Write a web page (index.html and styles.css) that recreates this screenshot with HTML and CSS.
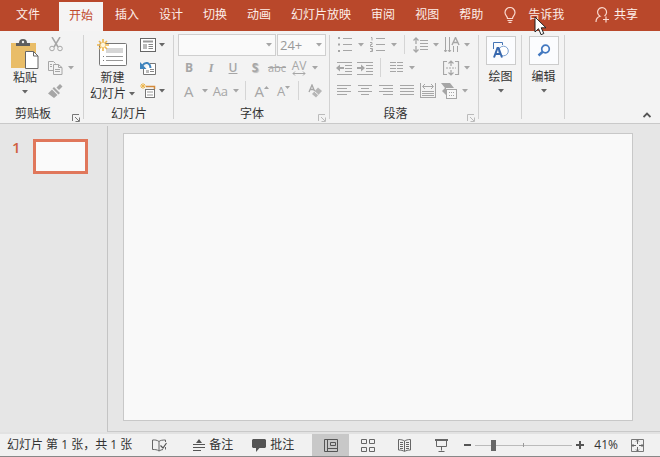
FILE: index.html
```html
<!DOCTYPE html>
<html lang="zh-CN">
<head>
<meta charset="utf-8">
<title>演示文稿</title>
<link rel="stylesheet" href="styles.css">
</head>
<body>
<svg class="defs" aria-hidden="true">
  <symbol id="caret" viewBox="0 0 6 4"><path d="M0 0h6L3 3.5z" fill="currentColor"/></symbol>
  <symbol id="launcher" viewBox="0 0 8 8"><path d="M.5 7V.5H7M3 3l4 4M7.5 3.5v4h-4" fill="none" stroke="currentColor"/></symbol>
</svg>
<header class="tabs">
  <nav class="tab-list">
    <a class="tab file" href="#">文件</a>
    <a class="tab active" href="#">开始</a>
    <a class="tab" href="#">插入</a>
    <a class="tab" href="#">设计</a>
    <a class="tab" href="#">切换</a>
    <a class="tab" href="#">动画</a>
    <a class="tab" href="#">幻灯片放映</a>
    <a class="tab" href="#">审阅</a>
    <a class="tab" href="#">视图</a>
    <a class="tab" href="#">帮助</a>
  </nav>
  <button class="tell">
    <svg width="12" height="16" viewBox="0 0 12 16"><path d="M3.5 11.500C3.500 9 1 8.500 1 5.500a5 5 0 0 1 10 0c0 3-2.500 3.500-2.500 6zM3.500 13.500h5M4.500 15.400h3" fill="none" stroke="#fbd9cf" stroke-width="1.200"/></svg>
    <span>告诉我</span>
    <svg class="pointer" width="13" height="20" viewBox="0 0 13 20"><path d="M1 1v15l3.500-3.300 2.600 6 2.700-1.200-2.600-5.700H12z" fill="#fff" stroke="#222"/></svg>
  </button>
  <button class="share">
    <svg width="15" height="16" viewBox="0 0 15 16"><path d="M1 15c0-3 1.500-5 4-5.800a4.500 4.500 0 1 1 4.500-.2M11 9.500v6M8 12.500h6" fill="none" stroke="#fbd9cf" stroke-width="1.200"/></svg>
    <span>共享</span>
  </button>
</header>

<section class="ribbon">
  <div class="group clipboard">
    <div class="body">
      <button class="big">
        <svg width="28" height="31" viewBox="0 0 28 31"><path d="M0 4h25v25H0z" fill="#e9bd68"/><path d="M5 4h14v3H5z" fill="#5f5f5f"/><path d="M8 4a4 4 0 0 1 8 0z" fill="#5f5f5f"/><circle cx="12" cy="3" r="1.200" fill="#f3f3f3"/><path d="M14.500 12.500h8l4.500 4.500v12.500H14.500z" fill="#fff" stroke="#666"/><path d="M22.500 12.500V17H27" fill="none" stroke="#666"/></svg>
        <span>粘贴</span>
        <svg class="caret"><use href="#caret"/></svg>
      </button>
      <div class="stack muted">
        <div class="row"><button class="tool" aria-label="剪切"><svg width="14" height="15" viewBox="0 0 14 15"><path d="M3 0l6 10M11 0L5 10" fill="none" stroke="currentColor" stroke-width="1.500"/><circle cx="3" cy="11.500" r="2.300" fill="none" stroke="currentColor"/><circle cx="11" cy="11.500" r="2.300" fill="none" stroke="currentColor"/></svg></button></div>
        <div class="row"><button class="tool" aria-label="复制"><svg width="15" height="14" viewBox="0 0 15 14"><path d="M5.500 9.500h-5v-9h5l2 2M5.500 3.500h5l3.500 3v7H5.500zM10.500 3.500v3H14M2 3.500h2M2 5.500h2M7 8.500h5M7 10.500h5" fill="none" stroke="currentColor"/></svg></button><button class="arrow" aria-label="复制选项"><svg class="caret"><use href="#caret"/></svg></button></div>
        <div class="row"><button class="tool" aria-label="格式刷"><svg width="15" height="14" viewBox="0 0 15 14"><path d="M12 0l2.500 2.500L11 6 8.500 3.500z" fill="currentColor"/><path d="M6 3l6 6-1.500 1.500-6-6zM4 5.500l5.500 5.500-3.500 3L0 9.500z" fill="currentColor"/></svg></button></div>
      </div>
    </div>
    <div class="label"><span>剪贴板</span><button class="launch" aria-label="剪贴板选项"><svg width="8" height="8"><use href="#launcher"/></svg></button></div>
  </div>

  <div class="group slides">
    <div class="body">
      <button class="big">
        <svg width="32" height="31" viewBox="0 0 32 31"><rect x="2.500" y="4.500" width="27" height="22" rx="1" fill="#fff" stroke="#777"/><path d="M9 9h17v5H9z" fill="#d6d6d6"/><path d="M9 17.500h17M9 21.500h17" stroke="#999"/><path d="M6 17.500h1M6 21.500h1" stroke="#777"/><path d="M6 0v12M0 6h12M2 2l8 8M10 2l-8 8" stroke="#eeb64c" stroke-width="1.600"/><circle cx="6" cy="6" r="2.200" fill="#fff6dc"/></svg>
        <span>新建</span>
        <span class="with-caret">幻灯片<svg class="caret"><use href="#caret"/></svg></span>
      </button>
      <div class="stack">
        <div class="row"><button class="tool" aria-label="版式"><svg width="16" height="14" viewBox="0 0 16 14"><rect x=".5" y=".5" width="15" height="13" fill="#fff" stroke="#666"/><path d="M3 3.500h10" stroke="#999" stroke-width="2"/><path d="M3 6h4v5H3z" fill="#bbb"/><path d="M8.500 6.500H13M8.500 8.500H13M8.500 10.500H13" stroke="#888"/></svg></button><button class="arrow" aria-label="版式选项"><svg class="caret"><use href="#caret"/></svg></button></div>
        <div class="row"><button class="tool" aria-label="重置"><svg width="16" height="14" viewBox="0 0 16 14"><path d="M3.500 8v5.500h12V2.500H10" fill="#fff" stroke="#777"/><path d="M6 9h3v3H6z" fill="#bbb"/><path d="M10 8.500h4M10 10.500h4" stroke="#888"/><path d="M2.500 4.500C5 .5 10 1 10.500 7" fill="none" stroke="#3f84bd" stroke-width="2"/><path d="M0 1v7h6.500z" fill="#3f84bd"/></svg></button></div>
        <div class="row"><button class="tool" aria-label="节"><svg width="16" height="15" viewBox="0 0 16 15"><path d="M3 0v6M0 3h6M1 1l4 4M5 1L1 5" stroke="#eeb64c"/><path d="M6 3.500h8.500V6" fill="none" stroke="#d48a3a" stroke-width="1.500"/><rect x="5.500" y="6.500" width="9" height="8" fill="#fff" stroke="#777"/><path d="M7 9h6M7 12h6" stroke="#999"/></svg></button><button class="arrow" aria-label="节选项"><svg class="caret"><use href="#caret"/></svg></button></div>
      </div>
    </div>
    <div class="label"><span>幻灯片</span></div>
  </div>

  <div class="group font">
    <div class="stack muted">
      <div class="row combos">
        <div class="combo name"><select aria-label="字体"><option></option></select><svg class="caret"><use href="#caret"/></svg></div>
        <div class="combo size"><select aria-label="字号"><option>24+</option></select><svg class="caret"><use href="#caret"/></svg></div>
      </div>
      <div class="row">
        <button class="tool bold">B</button><button class="tool italic">I</button><button class="tool underline">U</button><button class="tool shadow">S</button><button class="tool strike">abc</button><button class="tool spacing">AV<svg width="14" height="5" viewBox="0 0 14 5"><path d="M1 2.500h12M3 .5l-2 2 2 2M11 .5l2 2-2 2" fill="none" stroke="currentColor"/></svg></button><button class="arrow" aria-label="字符间距"><svg class="caret"><use href="#caret"/></svg></button>
      </div>
      <div class="row">
        <button class="tool large">A</button><button class="arrow" aria-label="字体颜色"><svg class="caret"><use href="#caret"/></svg></button><button class="tool case">Aa</button><button class="arrow" aria-label="更改大小写"><svg class="caret"><use href="#caret"/></svg></button><i class="sep"></i>
        <button class="tool grow">A<svg width="5" height="9" viewBox="0 0 5 9"><path d="M0 3l2.500-3L5 3z" fill="currentColor"/></svg></button><button class="tool shrink">A<svg width="5" height="9" viewBox="0 0 5 9"><path d="M0 0h5L2.500 3z" fill="currentColor"/></svg></button><i class="sep"></i>
        <button class="tool" aria-label="清除格式"><svg width="14" height="14" viewBox="0 0 14 14"><path d="M1 8l3-7 2.500 6M2 5.500h4" fill="none" stroke="currentColor" stroke-width="1.300"/><path d="M10 3.500L14 7l-6 6.500-4-3.500z" fill="currentColor" opacity=".8"/><path d="M6.500 7.500l4 3.500" stroke="#f3f3f3"/></svg></button>
      </div>
    </div>
    <div class="label"><span>字体</span><button class="launch muted" aria-label="字体选项"><svg width="8" height="8"><use href="#launcher"/></svg></button></div>
  </div>

  <div class="group paragraph">
    <div class="stack muted">
      <div class="row">
        <button class="tool" aria-label="项目符号"><svg width="14" height="15" viewBox="0 0 14 15"><path d="M5 1.500h9M5 7.500h9M5 13.500h9" stroke="currentColor"/><path d="M0 0h2v2H0zM0 6.500h2v2H0zM0 13h2v2H0z" fill="currentColor"/></svg></button><button class="arrow wide" aria-label="项目符号选项"><svg class="caret"><use href="#caret"/></svg></button>
        <button class="tool" aria-label="编号"><svg width="15" height="15" viewBox="0 0 15 15"><path d="M6 1.500h9M6 7.500h9M6 13.500h9M1 .5h1v3M0 5.500h2v2H.5v2H3M0 11.500h2.500v3H0M1 13h1" fill="none" stroke="currentColor"/></svg></button><button class="arrow wide" aria-label="编号选项"><svg class="caret"><use href="#caret"/></svg></button><i class="sep"></i>
        <button class="tool" aria-label="行距"><svg width="15" height="16" viewBox="0 0 15 16"><path d="M3 1v6M.5 3.500L3 1l2.500 2.500M3 9v6M.5 12.500L3 15l2.500-2.500" fill="none" stroke="currentColor" stroke-width="1.300"/><path d="M7 3.500h8M7 6.500h8M7 9.500h8M7 12.500h8" stroke="currentColor"/></svg></button><button class="arrow" aria-label="行距选项"><svg class="caret"><use href="#caret"/></svg></button>
        <button class="tool last" aria-label="文字方向"><svg width="16" height="16" viewBox="0 0 16 16"><path d="M1.500 0v15M5.500 0v15M9.500 9v6M13.500 9v6M0 13l1.500 2L3 13M4 13l1.500 2L7 13" fill="none" stroke="currentColor"/><path d="M8 8l3.500-7.500L15 8M9.500 5.500h4" fill="none" stroke="currentColor" stroke-width="1.400"/></svg></button><button class="arrow" aria-label="文字方向选项"><svg class="caret"><use href="#caret"/></svg></button>
      </div>
      <div class="row">
        <button class="tool" aria-label="减少缩进"><svg width="17" height="14" viewBox="0 0 17 14"><path d="M1 1.500h15M9 4.500h7M9 7.500h7M9 10.500h7M1 13.500h15" stroke="currentColor"/><path d="M0 7l4-3.500V6h4v2H4v2.500z" fill="currentColor"/></svg></button>
        <button class="tool" aria-label="增加缩进"><svg width="17" height="14" viewBox="0 0 17 14"><path d="M0 1.500h16M9 4.500h7M9 7.500h7M9 10.500h7M0 13.500h16" stroke="currentColor"/><path d="M8 7L4 3.500V6H0v2h4v2.500z" fill="currentColor"/></svg></button><i class="sep"></i>
        <button class="tool" aria-label="分栏"><svg width="13" height="11" viewBox="0 0 13 11"><path d="M0 .5h6M7 .5h6M0 3.500h6M7 3.500h6M0 6.500h6M7 6.500h6M0 9.500h6M7 9.500h6" stroke="currentColor"/></svg></button><button class="arrow" aria-label="分栏选项"><svg class="caret"><use href="#caret"/></svg></button>
        <button class="tool last" aria-label="对齐文本"><svg width="17" height="16" viewBox="0 0 17 16"><path d="M4 1.500H.5v13H4M12 1.500h3.500v13H12M8 1v5M5.500 3.500L8 1 10.500 3.500M8 10v5M5.500 12.500L8 15l2.500-2.500" fill="none" stroke="currentColor" stroke-width="1.200"/><path d="M3 8h10" stroke="currentColor" stroke-dasharray="2 1"/></svg></button><button class="arrow" aria-label="对齐文本选项"><svg class="caret"><use href="#caret"/></svg></button>
      </div>
      <div class="row">
        <button class="tool" aria-label="左对齐"><svg width="15" height="11" viewBox="0 0 15 11"><path d="M0 .5h14M0 3.500h10M0 6.500h14M0 9.500h10" stroke="currentColor"/></svg></button>
        <button class="tool" aria-label="居中"><svg width="15" height="11" viewBox="0 0 15 11"><path d="M0 .5h14M3 3.500h8M0 6.500h14M3 9.500h8" stroke="currentColor"/></svg></button>
        <button class="tool" aria-label="右对齐"><svg width="15" height="11" viewBox="0 0 15 11"><path d="M0 .5h14M4 3.500h10M0 6.500h14M4 9.500h10" stroke="currentColor"/></svg></button>
        <button class="tool" aria-label="两端对齐"><svg width="15" height="11" viewBox="0 0 15 11"><path d="M0 .5h14M0 3.500h14M0 6.500h14M0 9.500h14" stroke="currentColor"/></svg></button>
        <button class="tool" aria-label="分散对齐"><svg width="17" height="15" viewBox="0 0 17 15"><path d="M.5 0v15M15.500 0v15M3 3.500h10M5 1L2.500 3.500 5 6M11 1l2.500 2.500L11 6M2 8.500h12M2 10.500h12M2 12.500h12M0 14.500h16" fill="none" stroke="currentColor"/></svg></button>
        <button class="tool" aria-label="转换为 SmartArt"><svg width="17" height="16" viewBox="0 0 17 16"><path d="M0 0h9l4 5H5v7L1 8l3-3z" fill="currentColor"/><rect x="5.500" y="6.500" width="10" height="9" fill="#f8f8f8" stroke="currentColor"/><path d="M8 9.500h6M8 12.500h6" stroke="currentColor" stroke-dasharray="1 1"/></svg></button><button class="arrow" aria-label="SmartArt 选项"><svg class="caret"><use href="#caret"/></svg></button>
      </div>
    </div>
    <div class="label"><span>段落</span><button class="launch muted" aria-label="段落选项"><svg width="8" height="8"><use href="#launcher"/></svg></button></div>
  </div>

  <div class="group collapsed">
    <button class="big">
      <span class="tile"><svg width="16" height="17" viewBox="0 0 16 17"><path d="M.5 7V.5h9V3" fill="none" stroke="#4575b5"/><circle cx="10.500" cy="9" r="4.800" fill="#fff" stroke="#7ba0d0"/><path d="M1 15.500L4.500 6h1L9 15.500M2.500 12h5" fill="none" stroke="#3868ae" stroke-width="2"/></svg></span>
      <span>绘图</span>
      <svg class="caret"><use href="#caret"/></svg>
    </button>
  </div>
  <div class="group collapsed">
    <button class="big">
      <span class="tile"><svg width="14" height="13" viewBox="0 0 14 13"><circle cx="8.500" cy="5" r="3.800" fill="none" stroke="#4278c0" stroke-width="1.700"/><path d="M6 7.500L1.500 11.500" stroke="#4278c0" stroke-width="2.500"/></svg></span>
      <span>编辑</span>
      <svg class="caret"><use href="#caret"/></svg>
    </button>
  </div>
  <button class="fold" aria-label="折叠功能区"><svg width="8" height="6" viewBox="0 0 8 6"><path d="M.5 5L4 1.500 7.500 5" fill="none" stroke="#555" stroke-width="1.800"/></svg></button>
</section>

<main class="workspace">
  <aside class="thumbs"><span class="num">1</span><button class="thumb" aria-label="幻灯片 1"></button></aside>
  <section class="stage"><div class="slide"></div></section>
</main>

<footer class="status">
  <span class="count">幻灯片 第 1 张，共 1 张</span>
  <button class="spell" aria-label="拼写检查"><svg width="15" height="13" viewBox="0 0 15 13"><path d="M7 2.500C5 1 3 .8.500 1v9.500c2.500 0 4.500 0 6.500 1.500zM7 2.500C8.500 1.300 10 1 13.500 1v2M7 12c1-.8 3-1.400 4-1.500M13.500 8v2.500" fill="none" stroke="#666"/><path d="M8.500 6.500L11 9l3.500-5" fill="none" stroke="#555" stroke-width="1.200"/></svg></button>
  <button class="notes"><svg width="12" height="12" viewBox="0 0 12 12"><path d="M3 4l3-4 3 4z" fill="#555"/><path d="M0 5.500h12M0 8.500h12M0 11.500h8" stroke="#555"/></svg>备注</button>
  <button class="comments"><svg width="14" height="13" viewBox="0 0 14 13"><path d="M1 0h12l1 1v7l-1 1H7.500L4 13V9H1L0 8V1z" fill="#555"/></svg>批注</button>
  <div class="views">
    <button class="view on" aria-label="普通视图"><svg width="14" height="13" viewBox="0 0 14 13"><path d="M.5.500h13v12H.5zM3.500.500v12M3.500 9.500h10M6.500 3.500h5v3h-5z" fill="none" stroke="#555"/></svg></button>
    <button class="view" aria-label="幻灯片浏览"><svg width="14" height="13" viewBox="0 0 14 13"><path d="M.5.500h5v4h-5zM8.500.500h5v4h-5zM.5 8.500h5v4h-5zM8.500 8.500h5v4h-5z" fill="none" stroke="#666"/></svg></button>
    <button class="view" aria-label="阅读视图"><svg width="13" height="13" viewBox="0 0 13 13"><path d="M6.500 2C5 1 3 .5.500.500v10.500c2.500 0 4.500.5 6 1.500 1.500-1 3.500-1.500 6-1.500V.5C10 .5 8 1 6.500 2zv10M2 3.500h3M2 5.500h3M2 7.500h3M2 9.500h3M8 3.500h3M8 5.500h3M8 7.500h3M8 9.500h3" fill="none" stroke="#666"/></svg></button>
    <button class="view" aria-label="幻灯片放映"><svg width="13" height="13" viewBox="0 0 13 13"><path d="M0 1h13" stroke="#666" stroke-width="2"/><path d="M1.500 2v5.500h10V2M6.500 7.500v4M3.500 12.500h6" fill="none" stroke="#666"/></svg></button>
  </div>
  <div class="zoom">
    <button class="step" aria-label="缩小"><svg width="7" height="8" viewBox="0 0 7 8"><path d="M0 4h7" stroke="#555" stroke-width="2"/></svg></button>
    <input type="range" min="0" max="100" value="17" aria-label="缩放">
    <button class="step" aria-label="放大"><svg width="8" height="8" viewBox="0 0 8 8"><path d="M0 4h8M4 0v8" stroke="#555" stroke-width="2"/></svg></button>
    <span class="percent">41%</span>
    <button class="step fit" aria-label="适应窗口"><svg width="13" height="13" viewBox="0 0 13 13"><path d="M.5.500h12v12H.5z" fill="none" stroke="#777"/><path d="M6.500 1v4M5 2.500l1.500-1.500L8 2.500M6.500 12V8M5 10.500L6.500 12 8 10.500M1 6.500h4M2.500 5L1 6.500 2.500 8M12 6.500H8M10.500 5L12 6.500 10.500 8" fill="none" stroke="#666"/></svg></button>
  </div>
</footer>
</body>
</html>
```

FILE: styles.css
```css
* { box-sizing: border-box; }
body {
  margin: 0;
  min-height: 100vh;
  display: flex;
  flex-direction: column;
  background: #e6e6e6;
  color: #333;
  font: 12px/16px "Open Sans", "Noto Sans CJK SC", sans-serif;
}
button {
  margin: 0;
  padding: 0;
  border: 0;
  background: none;
  color: inherit;
  font: inherit;
  display: flex;
  align-items: center;
  justify-content: center;
}
svg { display: block; flex: none; }
.defs { position: absolute; width: 0; height: 0; }
.caret { width: 6px; height: 4px; }

.tabs {
  display: flex;
  height: 31px;
  padding-bottom: 1px;
  background: #b9482b;
  color: #fff;
}
.tab-list { display: flex; }
.tab {
  display: flex;
  align-items: center;
  padding: 0 10px;
  color: #fdeee9;
  text-decoration: none;
}
.file { padding: 0 16px; margin-right: 3px; }
.active {
  margin: 2px 2px -1px 0;
  padding-bottom: 1px;
  background: #f5f4f4;
  color: #c14a2c;
}
.tell { position: relative; gap: 12px; margin-left: 11px; color: #fdeee9; }
.pointer { position: absolute; left: 30px; top: 16px; z-index: 2; }
.share { gap: 4px; margin: 0 22px 0 auto; color: #fdeee9; }

.ribbon {
  display: flex;
  padding-top: 2px;
  background: #f3f3f3;
  border-bottom: 1px solid #c9c9c9;
}
.group {
  position: relative;
  display: flex;
  flex-direction: column;
  height: 90px;
}
.group::after {
  content: "";
  position: absolute;
  right: 0;
  top: 2px;
  bottom: 4px;
  width: 1px;
  background: #d2d2d2;
}
.body { display: flex; }
.big {
  flex-direction: column;
  justify-content: flex-start;
  padding-top: 6px;
  color: #333;
}
.big > .caret { margin-top: 4px; }
.with-caret { display: flex; align-items: center; gap: 3px; }
.caret { color: #666; }
.label {
  position: relative;
  display: flex;
  justify-content: center;
  padding-top: 4px;
}
.launch { position: absolute; right: 4px; bottom: 0; color: #777; }
.row { display: flex; align-items: center; height: 23px; }
.tool { width: 21px; height: 21px; }
.arrow { width: 10px; height: 21px; }
.wide { width: 12px; }
.muted, .muted .caret { color: #a6a6a6; }
.sep { width: 1px; height: 19px; margin: 0 5px 0 4px; background: #d5d5d5; }

.clipboard { width: 84px; }
.clipboard .body { padding-left: 11px; gap: 6px; }
.clipboard .label { padding-right: 18px; }
.slides { width: 90px; }
.slides .body { padding-left: 6px; gap: 2px; }
.slides .arrow { width: 8px; }

.font { width: 156px; }
.font .stack { padding: 0 4px; }
.font .tool { width: 22px; }
.combos { gap: 1px; }
.combo { position: relative; height: 22px; }
.combo select {
  appearance: none;
  width: 100%;
  height: 22px;
  margin: 0;
  padding: 0 2px;
  border: 1px solid #cfcfcf;
  border-radius: 0;
  background: #fafafa;
  color: #999;
  font: 13px/16px "Open Sans", sans-serif;
  opacity: 1;
}
.combo .caret { position: absolute; right: 4px; top: 9px; }
.name { width: 98px; }
.size { width: 49px; }
.bold { font-weight: 700; }
.italic { font: italic 700 13px/16px "Liberation Serif", serif; }
.underline { font-weight: 600; text-decoration: underline; }
.shadow { font-weight: 700; text-shadow: 1px 1px 1px #bbb; }
.strike { font-size: 11px; text-decoration: line-through; }
.spacing { flex-direction: column; line-height: 11px; }
.large { font-size: 15px; }
.case { font-size: 13px; }
.grow { font-size: 15px; }
.shrink { font-size: 13px; }
.font .launch, .paragraph .launch { color: #bbb; }

.paragraph { width: 149px; }
.paragraph .stack { padding: 0 7px 0 4px; }
.last { margin-left: auto; }
.paragraph .label { padding-right: 18px; }

.collapsed { width: 43px; }
.collapsed .big { padding-top: 3px; }
.tile {
  display: flex;
  align-items: center;
  justify-content: center;
  width: 30px;
  height: 29px;
  margin-bottom: 4px;
  border: 1px solid #ccc;
  background: #fbfcfe;
}
.fold { margin: auto 9px 5px auto; }

.workspace { flex: 1; display: flex; }
.thumbs {
  display: flex;
  align-items: flex-start;
  width: 107px;
  padding: 15px 0 0 12px;
}
.num { width: 21px; color: #d0603f; font-size: 15px; font-weight: 600; }
.thumb { width: 55px; height: 35px; border: 3px solid #e0775b; background: #fafafa; }
.stage {
  flex: 1;
  display: flex;
  margin-top: 2px;
  padding: 7px 27px 10px 15px;
  border-left: 1px solid #c4c4c4;
  border-bottom: 1px solid #c9c9c9;
}
.slide { flex: 1; border: 1px solid #c8c8c8; background: #f9f9f9; }

.status {
  display: flex;
  align-items: center;
  height: 25px;
  border-top: 2px solid #e2e2e2;
  border-bottom: 1px solid #888;
  background: #f1f1f1;
  white-space: nowrap;
}
.count { padding-left: 7px; }
.spell { margin-left: 20px; }
.notes, .comments { gap: 4px; }
.notes { margin-left: 26px; }
.comments { margin-left: 19px; }
.views { display: flex; align-self: stretch; margin-left: auto; }
.view { width: 37px; }
.on { background: #c8c8c8; }
.zoom { display: flex; align-items: center; margin-left: 4px; padding-right: 16px; }
.zoom input {
  appearance: none;
  width: 97px;
  height: 12px;
  margin: 0 4px;
  background:
    linear-gradient(#999, #999) center / 1px 4px no-repeat,
    linear-gradient(#bbb, #bbb) center / 100% 1px no-repeat;
}
.zoom input::-webkit-slider-thumb {
  appearance: none;
  width: 5px;
  height: 11px;
  background: #666;
}
.percent { margin: 0 13px 0 10px; }
```
